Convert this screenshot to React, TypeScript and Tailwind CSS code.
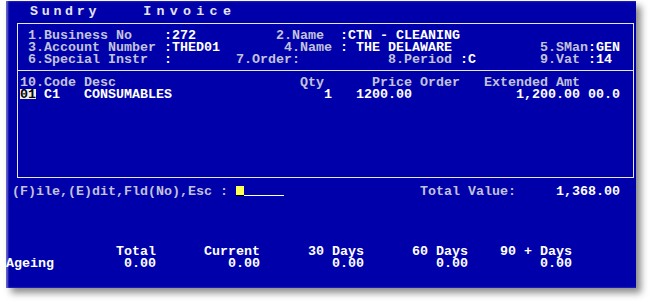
import { Fragment } from 'react'

// ── Palette ────────────────────────────────────────────────────────────────

const WHITE = 'text-white'
const GRAY = 'text-[#c2c2dc]'

type Seg = {
  col: number
  text?: string
  tone?: 'w' | 'g'
  node?: React.ReactNode
  span?: number
}

// One 12px text line on the 8px character grid; segments sit at their column
function Row({ segs, base = 0 }: { segs: Seg[]; base?: number }) {
  let cur = base
  return (
    <div className="h-3 leading-3 whitespace-pre">
      {segs.map((s, i) => {
        const pad = ' '.repeat(Math.max(0, s.col - cur))
        cur = s.col + (s.span ?? s.text?.length ?? 0)
        return (
          <Fragment key={i}>
            {pad}
            {s.node ?? (
              <span className={`inline-block align-top h-3 leading-3 ${s.tone === 'g' ? GRAY : WHITE}`}>
                {s.text}
              </span>
            )}
          </Fragment>
        )
      })}
    </div>
  )
}

// ── Title ──────────────────────────────────────────────────────────────────

function Title() {
  return (
    <div className="h-3 leading-3 flex text-[#e4e4f0] pl-6">
      {'Sundry'.split('').map((c, i) => (
        <span key={i} className="w-[11.7px]">{c}</span>
      ))}
      <span className="w-[43px]" />
      {'Invoice'.split('').map((c, i) => (
        <span key={'i' + i} className="w-[13.3px]">{c}</span>
      ))}
    </div>
  )
}

// ── Cursor field ───────────────────────────────────────────────────────────

function InputField() {
  return (
    <span className="inline-flex align-top h-[10px]">
      <span className="w-2 h-full bg-[#ffff55] border-b border-black" />
      <span className="w-10 h-full border-b border-white" />
    </span>
  )
}

const Inverse = () => (
  <span className="inline-block align-top h-[10px] leading-[11px] bg-[#ececec] text-black">01</span>
)

const AgeingLabel = () => (
  <span className="inline-block align-top w-12 h-3 leading-3 pl-[2px] text-white">Ageing</span>
)

// ── App ────────────────────────────────────────────────────────────────────

export default function App() {
  return (
    <div className="w-[656px] h-[308px] bg-white overflow-hidden">
      <div className="ml-[6px] mt-px w-[630px] h-[287px] bg-[#0000aa] overflow-hidden shadow-[inset_2px_0_2px_rgba(255,255,255,0.4),5px_5px_7px_rgba(0,0,0,0.45)]">
        <div className="pt-[5px] font-['Liberation_Mono',monospace] font-bold text-[13.333px]">
          <Title />

          {/* Invoice box */}
          <div className="mt-[5px] ml-[11px] w-[617px] h-[155px] border border-[#e6e6ee] flex flex-col">
            <div className="pt-[6px] pl-[2px] h-[47px] border-b border-[#e6e6ee]">
              <Row
                base={2}
                segs={[
                  { col: 3, text: '1.Business No', tone: 'g' },
                  { col: 20, text: ':272' },
                  { col: 34, text: '2.Name', tone: 'g' },
                  { col: 42, text: ':CTN - CLEANING' },
                ]}
              />
              <Row
                base={2}
                segs={[
                  { col: 3, text: '3.Account Number', tone: 'g' },
                  { col: 20, text: ':THED01' },
                  { col: 35, text: '4.Name', tone: 'g' },
                  { col: 42, text: ': THE DELAWARE' },
                  { col: 67, text: '5.SMan', tone: 'g' },
                  { col: 73, text: ':GEN' },
                ]}
              />
              <Row
                base={2}
                segs={[
                  { col: 3, text: '6.Special Instr', tone: 'g' },
                  { col: 20, text: ':' },
                  { col: 29, text: '7.Order:', tone: 'g' },
                  { col: 48, text: '8.Period', tone: 'g' },
                  { col: 57, text: ':C' },
                  { col: 67, text: '9.Vat', tone: 'g' },
                  { col: 73, text: ':14' },
                ]}
              />
            </div>

            {/* Line items */}
            <div className="pt-[6px] pl-[2px]">
              <Row
                base={2}
                segs={[
                  { col: 2, text: '10.Code', tone: 'g' },
                  { col: 10, text: 'Desc', tone: 'g' },
                  { col: 37, text: 'Qty', tone: 'g' },
                  { col: 46, text: 'Price', tone: 'g' },
                  { col: 52, text: 'Order', tone: 'g' },
                  { col: 60, text: 'Extended Amt', tone: 'g' },
                ]}
              />
              <Row
                base={2}
                segs={[
                  { col: 2, node: <Inverse />, span: 2 },
                  { col: 5, text: 'C1' },
                  { col: 10, text: 'CONSUMABLES' },
                  { col: 40, text: '1' },
                  { col: 44, text: '1200.00' },
                  { col: 64, text: '1,200.00' },
                  { col: 73, text: '00.0' },
                ]}
              />
            </div>
          </div>

          {/* Prompt */}
          <div className="mt-2 -ml-0.5">
            <Row
              segs={[
                { col: 1, text: '(F)ile,(E)dit,Fld(No),Esc :', tone: 'g' },
                { col: 29, node: <InputField />, span: 6 },
                { col: 52, text: 'Total Value:', tone: 'g' },
                { col: 69, text: '1,368.00' },
              ]}
            />
          </div>

          {/* Ageing */}
          <div className="mt-12 -ml-0.5">
            <Row
              segs={[
                { col: 14, text: 'Total' },
                { col: 25, text: 'Current' },
                { col: 38, text: '30 Days' },
                { col: 51, text: '60 Days' },
                { col: 62, text: '90 + Days' },
              ]}
            />
            <Row
              segs={[
                { col: 0, node: <AgeingLabel />, span: 6 },
                { col: 15, text: '0.00' },
                { col: 28, text: '0.00' },
                { col: 41, text: '0.00' },
                { col: 54, text: '0.00' },
                { col: 67, text: '0.00' },
              ]}
            />
          </div>
        </div>
      </div>
    </div>
  )
}
